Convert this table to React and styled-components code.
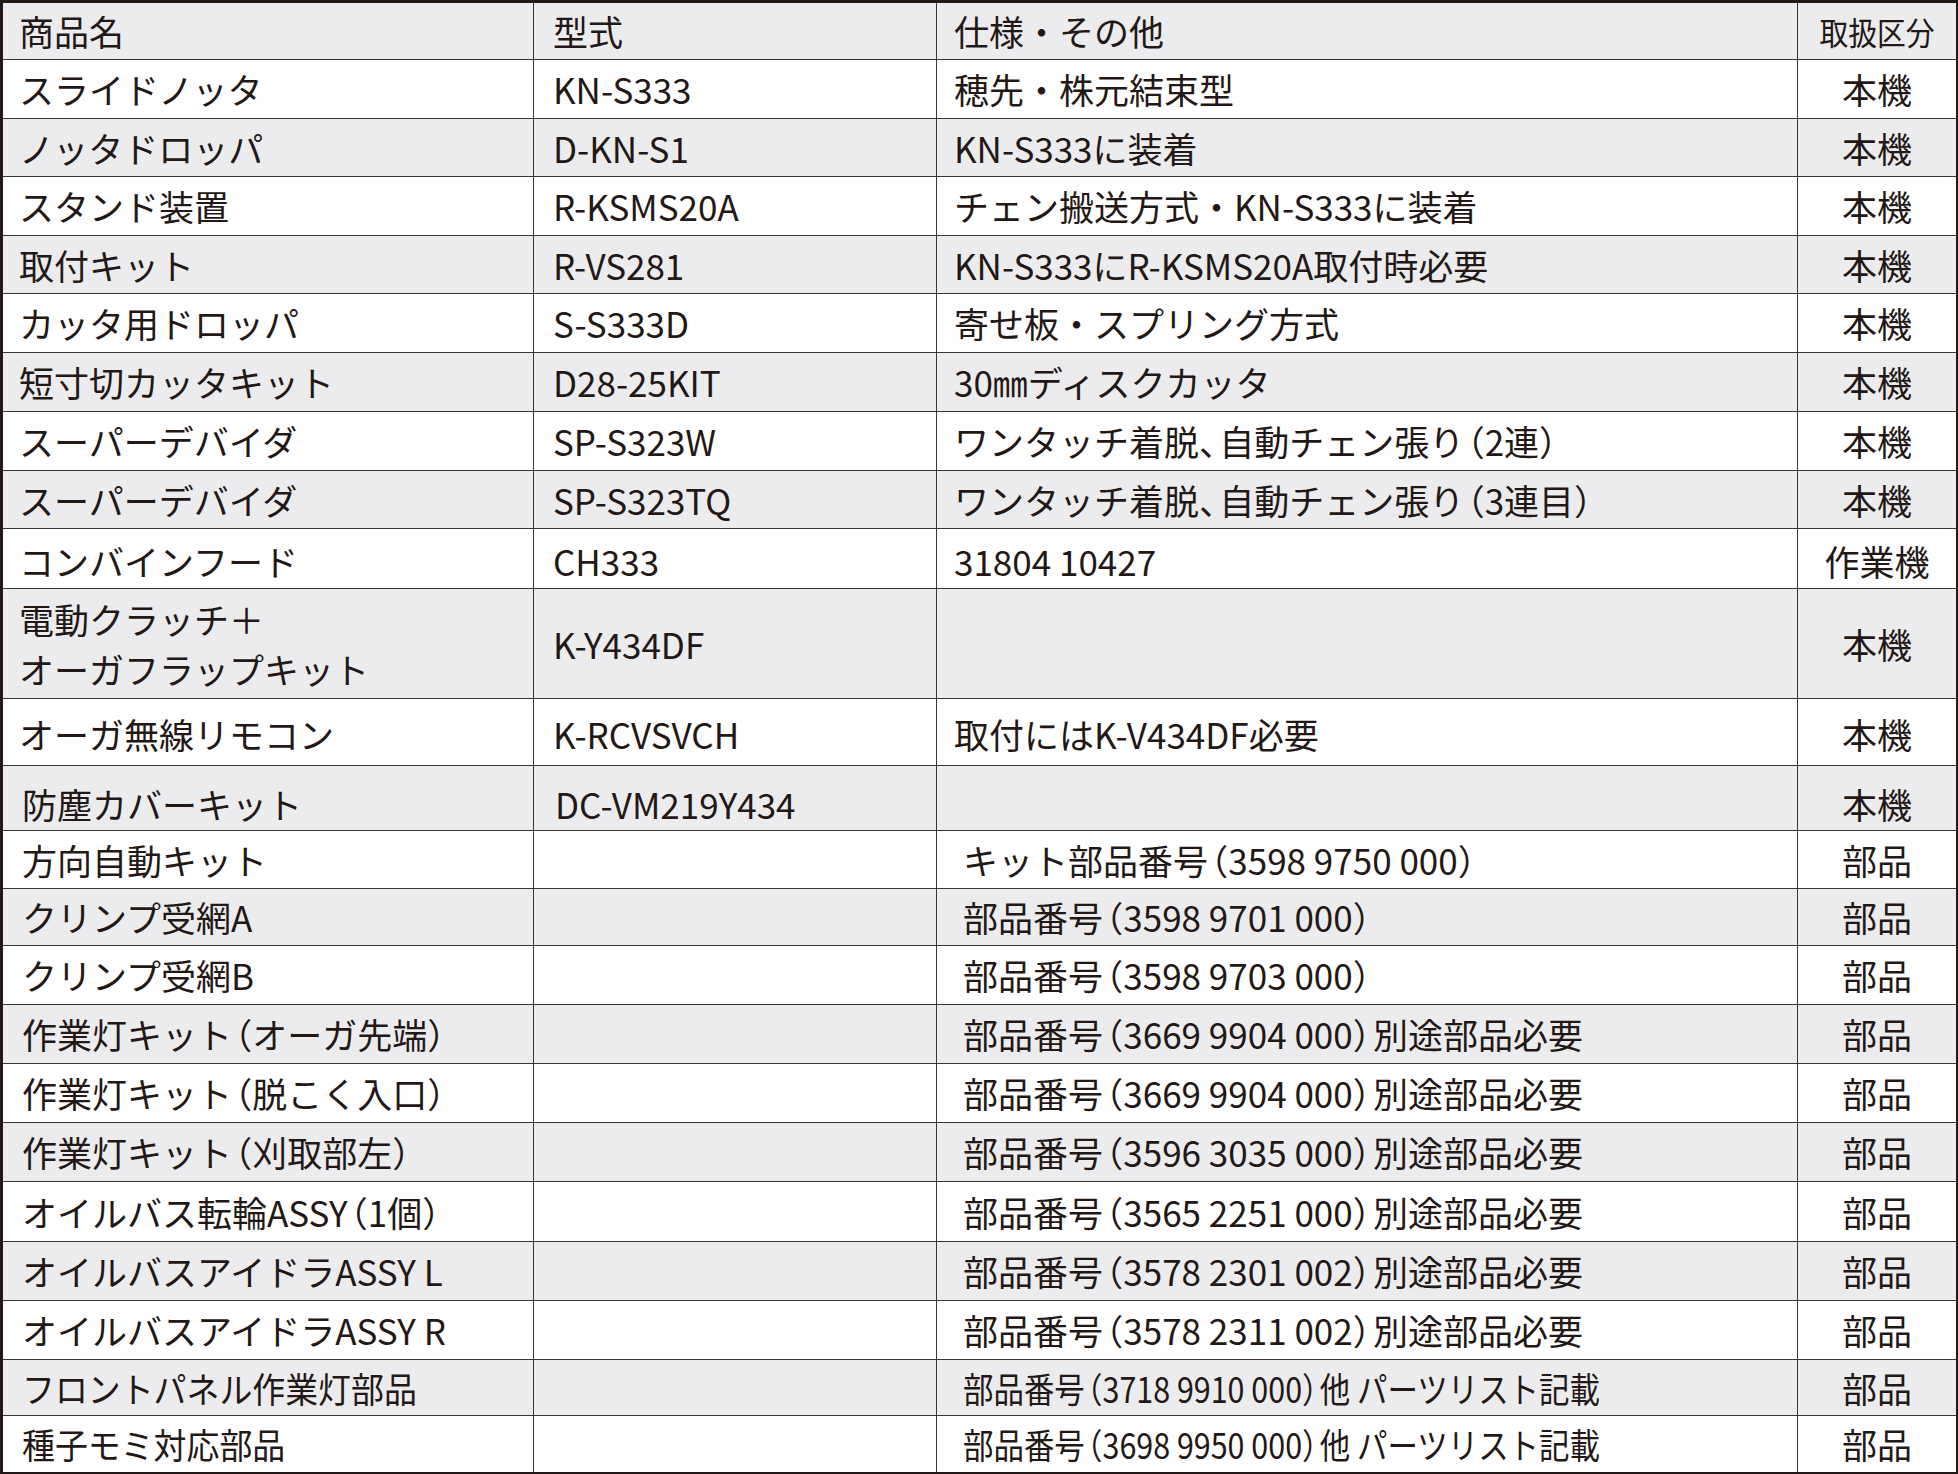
import React from "react";
import styled, { createGlobalStyle } from "styled-components";

const Global = createGlobalStyle`
  html, body { margin: 0; padding: 0; background: #ffffff; }
  body { font-family: "Noto Sans CJK JP", "Noto Sans", sans-serif; color: #231815; }
`;

const INK = "#231815";
const LINE = "#3a3636";
const GRAY = "#ececef";

const Table = styled.div`
  width: 1958px;
  height: 1474px;
  box-sizing: border-box;
  border-top: 3px solid ${INK};
  border-bottom: 2px solid ${INK};
  border-left: 3px solid ${INK};
  border-right: 2px solid ${INK};
  display: flex;
  flex-direction: column;
  font-family: "Noto Sans CJK JP", "Noto Sans", sans-serif;
  font-size: 35px;
  color: ${INK};
`;

const Row = styled.div`
  display: grid;
  grid-template-columns: 531px 403px 861px 1fr;
  height: ${(p) => p.$h}px;
  box-sizing: border-box;
  background: ${(p) => (p.$gray ? GRAY : "#ffffff")};
  border-bottom: ${(p) => (p.$last ? "none" : `1px solid ${LINE}`)};
`;

const Cell = styled.div`
  display: flex;
  align-items: center;
  justify-content: ${(p) => (p.$center ? "center" : "flex-start")};
  padding-left: ${(p) => (p.$center ? 0 : p.$pad)}px;
  padding-top: ${(p) => p.$shift || 0}px;
  box-sizing: border-box;
  border-right: ${(p) => (p.$end ? "none" : `1px solid ${LINE}`)};
  line-height: 50px;
  white-space: nowrap;
  overflow: hidden;
`;

const Label = styled.span`
  display: inline-block;
  font-size: ${(p) => p.$size || 35}px;
  transform: scaleX(${(p) => p.$sx || 1});
  transform-origin: ${(p) => (p.$center ? "center" : "left")} center;
  white-space: nowrap;
`;

const Lines = styled.span`
  display: flex;
  flex-direction: column;
  line-height: 50px;
`;

const Punct = styled.span`
  font-feature-settings: "halt" 1;
  padding-left: ${(p) => (p.$open ? "0.08em" : "0")};
  padding-right: ${(p) => (p.$open ? "0" : "0.08em")};
`;

function Jp({ text }) {
  const parts = [];
  let buf = "";
  let k = 0;
  for (const ch of text) {
    if (ch === "（" || ch === "）" || ch === "、") {
      if (buf) parts.push(buf);
      buf = "";
      parts.push(
        <Punct key={k++} $open={ch === "（"}>
          {ch}
        </Punct>
      );
    } else {
      buf += ch;
    }
  }
  if (buf) parts.push(buf);
  return <>{parts}</>;
}

const rows = [
  { h: 59, name: "スライドノッタ", model: "KN-S333", spec: "穂先・株元結束型", kind: "本機" },
  { h: 58, name: "ノッタドロッパ", model: "D-KN-S1", spec: "KN-S333に装着", kind: "本機" },
  { h: 59, name: "スタンド装置", model: "R-KSMS20A", spec: "チェン搬送方式・KN-S333に装着", kind: "本機" },
  { h: 58, name: "取付キット", model: "R-VS281", spec: "KN-S333にR-KSMS20A取付時必要", kind: "本機" },
  { h: 59, name: "カッタ用ドロッパ", model: "S-S333D", spec: "寄せ板・スプリング方式", kind: "本機" },
  { h: 59, name: "短寸切カッタキット", model: "D28-25KIT", spec: "30㎜ディスクカッタ", kind: "本機" },
  { h: 59, name: "スーパーデバイダ", model: "SP-S323W", spec: "ワンタッチ着脱、自動チェン張り（2連）", kind: "本機" },
  { h: 58, name: "スーパーデバイダ", model: "SP-S323TQ", spec: "ワンタッチ着脱、自動チェン張り（3連目）", kind: "本機" },
  { h: 60, name: "コンバインフード", model: "CH333", spec: "31804 10427", kind: "作業機", shift: 4 },
  { h: 110, name: ["電動クラッチ＋", "オーガフラップキット"], model: "K-Y434DF", spec: "", kind: "本機" },
  { h: 67, name: "オーガ無線リモコン", model: "K-RCVSVCH", spec: "取付にはK-V434DF必要", kind: "本機", shift: 4 },
  { h: 65, name: "防塵カバーキット", model: "DC-VM219Y434", spec: "", kind: "本機", shift: 12, namePad: 19, modelPad: 21 },
  { h: 58, name: "方向自動キット", model: "", spec: "キット部品番号（3598 9750 000）", kind: "部品", late: true },
  { h: 57, name: "クリンプ受網A", model: "", spec: "部品番号（3598 9701 000）", kind: "部品", late: true },
  { h: 59, name: "クリンプ受網B", model: "", spec: "部品番号（3598 9703 000）", kind: "部品", late: true },
  { h: 59, name: "作業灯キット（オーガ先端）", model: "", spec: "部品番号（3669 9904 000）別途部品必要", kind: "部品", late: true },
  { h: 59, name: "作業灯キット（脱こく入口）", model: "", spec: "部品番号（3669 9904 000）別途部品必要", kind: "部品", late: true },
  { h: 59, name: "作業灯キット（刈取部左）", model: "", spec: "部品番号（3596 3035 000）別途部品必要", kind: "部品", late: true },
  { h: 60, name: "オイルバス転輪ASSY（1個）", model: "", spec: "部品番号（3565 2251 000）別途部品必要", kind: "部品", late: true },
  { h: 59, name: "オイルバスアイドラASSY L", model: "", spec: "部品番号（3578 2301 002）別途部品必要", kind: "部品", late: true },
  { h: 59, name: "オイルバスアイドラASSY R", model: "", spec: "部品番号（3578 2311 002）別途部品必要", kind: "部品", late: true },
  { h: 56, name: "フロントパネル作業灯部品", model: "", spec: "部品番号（3718 9910 000）他 パーツリスト記載", kind: "部品", late: true, tight: true },
  { h: 56, name: "種子モミ対応部品", model: "", spec: "部品番号（3698 9950 000）他 パーツリスト記載", kind: "部品", late: true, tight: true },
];

export default function App() {
  return (
    <>
      <Global />
      <Table>
        <Row $h={57} $gray>
          <Cell $pad={16}>
            <Label>商品名</Label>
          </Cell>
          <Cell $pad={19}>
            <Label>型式</Label>
          </Cell>
          <Cell $pad={17}>
            <Label>仕様・その他</Label>
          </Cell>
          <Cell $center $end>
            <Label $center $size={32} $sx={0.9}>
              取扱区分
            </Label>
          </Cell>
        </Row>
        {rows.map((r, i) => (
          <Row key={i} $h={r.h} $gray={i % 2 === 1} $last={i === rows.length - 1}>
            <Cell $pad={r.namePad || (r.late ? 19 : 16)} $shift={r.shift}>
              {Array.isArray(r.name) ? (
                <Lines>
                  {r.name.map((n) => (
                    <Label key={n}>{n}</Label>
                  ))}
                </Lines>
              ) : (
                <Label $sx={r.tight ? 0.94 : 1}>
                  <Jp text={r.name} />
                </Label>
              )}
            </Cell>
            <Cell $pad={r.modelPad || 19} $shift={r.shift}>
              <Label>{r.model}</Label>
            </Cell>
            <Cell $pad={r.late ? 26 : 17} $shift={r.shift}>
              <Label $sx={r.tight ? 0.87 : 1}>
                <Jp text={r.spec} />
              </Label>
            </Cell>
            <Cell $center $end $shift={r.shift}>
              <Label $center>{r.kind}</Label>
            </Cell>
          </Row>
        ))}
      </Table>
    </>
  );
}
